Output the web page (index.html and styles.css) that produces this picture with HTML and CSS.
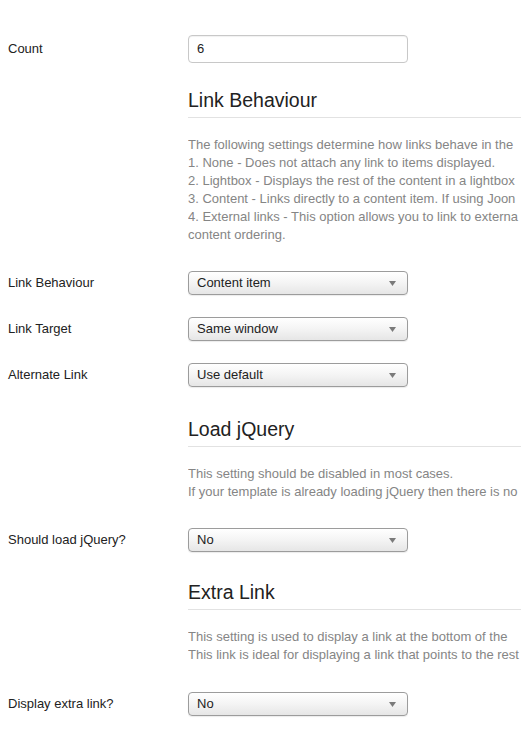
FILE: index.html
```html
<!DOCTYPE html>
<html>
<head>
<meta charset="utf-8">
<link rel="stylesheet" href="styles.css">
</head>
<body>
<div class="form">
  <div class="row row-input">
    <div class="label">Count</div>
    <div class="controls"><div class="input">6</div></div>
  </div>

  <div class="section first">
    <h3 class="heading">Link Behaviour</h3>
    <div class="desc">
      <div class="line">The following settings determine how links behave in the</div>
      <div class="line">1. None - Does not attach any link to items displayed.</div>
      <div class="line">2. Lightbox - Displays the rest of the content in a lightbox</div>
      <div class="line">3. Content - Links directly to a content item. If using Joon</div>
      <div class="line">4. External links - This option allows you to link to externa</div>
      <div class="line">content ordering.</div>
    </div>
  </div>

  <div class="row row-select after-desc">
    <div class="label">Link Behaviour</div>
    <div class="controls"><div class="select"><span>Content item</span><svg class="arrow" width="7" height="5" viewBox="0 0 7 5"><path d="M0 0H7L3.5 5Z" fill="#7a7a7a"/></svg></div></div>
  </div>
  <div class="row row-select">
    <div class="label">Link Target</div>
    <div class="controls"><div class="select"><span>Same window</span><svg class="arrow" width="7" height="5" viewBox="0 0 7 5"><path d="M0 0H7L3.5 5Z" fill="#7a7a7a"/></svg></div></div>
  </div>
  <div class="row row-select">
    <div class="label">Alternate Link</div>
    <div class="controls"><div class="select"><span>Use default</span><svg class="arrow" width="7" height="5" viewBox="0 0 7 5"><path d="M0 0H7L3.5 5Z" fill="#7a7a7a"/></svg></div></div>
  </div>

  <div class="section">
    <h3 class="heading">Load jQuery</h3>
    <div class="desc">
      <div class="line">This setting should be disabled in most cases.</div>
      <div class="line">If your template is already loading jQuery then there is no</div>
    </div>
  </div>

  <div class="row row-select after-desc">
    <div class="label">Should load jQuery?</div>
    <div class="controls"><div class="select"><span>No</span><svg class="arrow" width="7" height="5" viewBox="0 0 7 5"><path d="M0 0H7L3.5 5Z" fill="#7a7a7a"/></svg></div></div>
  </div>

  <div class="section last">
    <h3 class="heading">Extra Link</h3>
    <div class="desc">
      <div class="line">This setting is used to display a link at the bottom of the</div>
      <div class="line">This link is ideal for displaying a link that points to the rest</div>
    </div>
  </div>

  <div class="row row-select after-desc final">
    <div class="label">Display extra link?</div>
    <div class="controls"><div class="select"><span>No</span><svg class="arrow" width="7" height="5" viewBox="0 0 7 5"><path d="M0 0H7L3.5 5Z" fill="#7a7a7a"/></svg></div></div>
  </div>
</div>
</body>
</html>
```

FILE: styles.css
```css
html, body {
  margin: 0;
  padding: 0;
  background: #ffffff;
}
body {
  width: 521px;
  height: 750px;
  overflow: hidden;
  font-family: "Liberation Sans", Arial, sans-serif;
  color: #333333;
}
.form {
  padding: 35px 0 0 8px;
}
.row {
  display: grid;
  grid-template-columns: 180px 220px;
  align-items: center;
}
.label {
  font-size: 13px;
  color: #222222;
  line-height: 18px;
}
.input {
  box-sizing: border-box;
  height: 28px;
  width: 220px;
  border: 1px solid #c8c8c8;
  border-radius: 4px;
  padding: 0 8px;
  font-size: 13px;
  line-height: 26px;
  color: #222222;
  box-shadow: inset 0 1px 1px rgba(0,0,0,0.06);
}
.row-select {
  margin-top: 22px;
}
.row-select.after-desc {
  margin-top: 27px;
}
.row-select.final {
  margin-top: 28px;
}
.select {
  box-sizing: border-box;
  height: 24px;
  width: 220px;
  border: 1px solid #9c9c9c;
  border-radius: 4px;
  padding: 0 8px;
  display: flex;
  align-items: center;
  justify-content: space-between;
  font-size: 13px;
  color: #222222;
  background: linear-gradient(#ffffff, #f4f4f4 50%, #e6e6e6);
  box-shadow: 0 1px 1px rgba(0,0,0,0.08);
}
.select span {
  line-height: 18px;
}
.arrow {
  margin-right: 3px;
}
.section {
  margin: 29px 0 0 180px;
  overflow: hidden;
}
.section.first {
  margin-top: 24px;
}
.section.last {
  margin-top: 27px;
}
.heading {
  margin: 0;
  font-size: 19.5px;
  font-weight: normal;
  line-height: 26px;
  color: #222222;
  padding-bottom: 4px;
  border-bottom: 1px solid #e2e2e2;
}
.desc {
  margin-top: 18px;
  font-size: 13px;
  line-height: 18px;
  color: #858585;
}
.line {
  white-space: nowrap;
}
```
